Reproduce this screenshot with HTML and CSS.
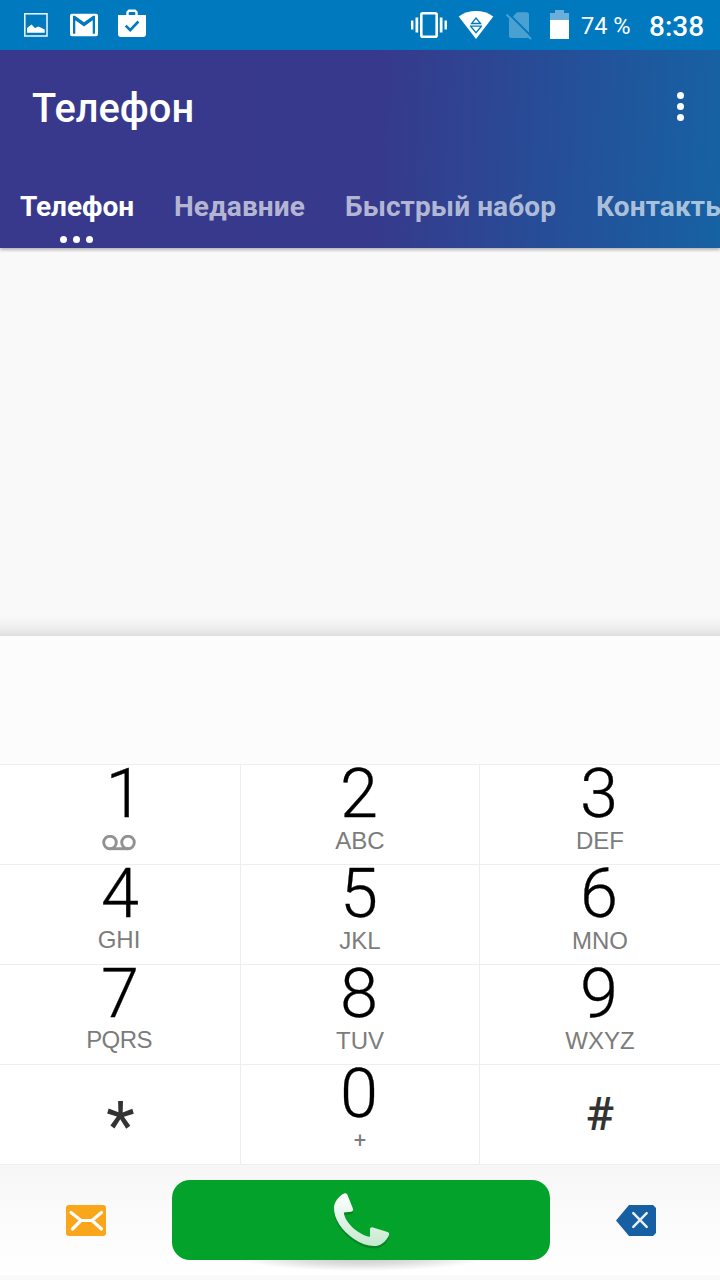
FILE: index.html
```html
<!DOCTYPE html>
<html lang="ru">
<head>
<meta charset="utf-8">
<title>Телефон</title>
<link rel="stylesheet" href="styles.css">
</head>
<body>
<div class="screen">
  <div class="status">
    <svg class="status-left" width="150" height="50" viewBox="0 0 150 50">
      <rect x="24.8" y="13.8" width="22.200" height="22.200" fill="none" stroke="#e4f1f9" stroke-width="1.600"/>
      <path fill="#fff" d="M27 32.8v-4.800l4.500-3.600 3.500 3.600 3.500-1.500 6.200 3v3.300z"/>
      <path fill="#fff" fill-rule="evenodd" d="M72 13.700h24a2 2 0 0 1 2 2v18.600a2 2 0 0 1-2 2H72a2 2 0 0 1-2-2V15.700a2 2 0 0 1 2-2zM73 15.700v18h2.300V20.200L84 26.500l8.700-6.300v13.500H95v-18h-1.800L84 22.300l-9.200-6.600z"/>
      <path fill="#fff" d="M118 15h28v19a3 3 0 0 1-3 3h-22a3 3 0 0 1-3-3z"/>
      <path fill="none" stroke="#fff" stroke-width="2.400" d="M127.500 15.500v-3.300l1.500-1.500h6l1.500 1.500v3.300"/>
      <path fill="none" stroke="#0179bf" stroke-width="2.600" d="M125.700 25.700l4.500 4.500 8.200-8.700"/>
    </svg>
    <svg class="status-icons" width="164" height="50" viewBox="410 0 164 50">
      <rect x="421.300" y="13.200" width="15.400" height="23.600" rx="1.500" fill="none" stroke="#fff" stroke-width="2.600"/>
      <path fill="#fff" d="M411 20.500h2.400v9H411zM415.500 17.500h2.700v15h-2.700zM439.800 17.500h2.700v15h-2.700zM444.500 20.500h2.400v9h-2.400z"/>
      <path fill="#fff" d="M458.700 16.500C469 9.300 483 9.300 493.300 16.500L476 39z"/>
      <path fill="none" stroke="#0179bf" stroke-width="1.300" d="M471.600 23.500h9L476 18zM470 26.200h12M470.800 26.500l5.200 6.200 5.200-6.200"/>
      <path fill="#4ba0d2" d="M514 15.500l3-3.300h9.500a2.500 2.500 0 0 1 2.500 2.500V36a2 2 0 0 1-2 2h-16a2 2 0 0 1-2-2V19.500z"/>
      <path stroke="#0179bf" stroke-width="2" d="M509 14l22 22"/>
      <path stroke="#4ba0d2" stroke-width="2" d="M506.500 14.500l24.500 24.500"/>
      <path fill="#69afd9" d="M550 13h5v-3h9v3h5v8h-19z"/>
      <path fill="#fff" d="M550 20h19v19h-19z"/>
    </svg>
    <span class="battery">74 %</span>
    <span class="clock">8:38</span>
  </div>
  <header class="header">
    <div class="title-row">
      <h1 class="title">Телефон</h1>
      <div class="menu"><i></i><i></i><i></i></div>
    </div>
    <nav class="tabs">
      <span class="tab tab-active">Телефон</span>
      <span class="tab">Недавние</span>
      <span class="tab">Быстрый набор</span>
      <span class="tab">Контакты</span>
    </nav>
    <div class="dots"><i></i><i></i><i></i></div>
  </header>
  <main class="list"></main>
  <div class="display"></div>
  <div class="pad">
    <div class="key left one"><b>1</b>
      <svg class="voicemail" width="34" height="16" viewBox="0 0 34 16"><g fill="none" stroke="#929292" stroke-width="2.900"><circle cx="8" cy="7.500" r="6.300"/><circle cx="26" cy="7.500" r="6.300"/><path d="M8 13.700h18"/></g></svg>
    </div>
    <div class="key low"><b>2</b><span>ABC</span></div>
    <div class="key"><b>3</b><span>DEF</span></div>
    <div class="key left"><b>4</b><span>GHI</span></div>
    <div class="key"><b>5</b><span>JKL</span></div>
    <div class="key"><b>6</b><span>MNO</span></div>
    <div class="key left"><b>7</b><span class="tight">PQRS</span></div>
    <div class="key"><b>8</b><span>TUV</span></div>
    <div class="key"><b>9</b><span>WXYZ</span></div>
    <div class="key symbol star">*</div>
    <div class="key"><b>0</b><span class="plus">+</span></div>
    <div class="key symbol hash">#</div>
  </div>
  <footer class="actions">
    <svg class="mail" width="40" height="31" viewBox="0 0 40 31"><rect width="40" height="31" rx="3" fill="#f9a61a"/><path d="M5 7.500l10 8h11l9.500-8M6.500 24l8.500-8.500M26 15.500l9.500 8.500" fill="none" stroke="#fff" stroke-width="3.200" stroke-linecap="round"/></svg>
    <div class="call">
      <svg width="60" height="60" viewBox="0 0 60 60">
        <defs><linearGradient id="handset" x1="0" y1="0" x2="0" y2="1"><stop offset="0" stop-color="#fff"/><stop offset="1" stop-color="#c5e9cf"/></linearGradient></defs>
        <path class="phone-shade" transform="translate(0 2.500)" d="M15 3.200C12 3.500 4.500 10 4 17c-.5 12 8 24 20 32 7 5 15 7.500 22 7 6-.5 11-6 13-11 .5-1.500 0-2.500-1.500-3L43 37.500c-1.800-.5-3 .5-3 2v7.200C31 46 15 34 13.800 22.500l7.400-.8c1.600-.3 2.300-1.500 1.800-3L17.500 5c-.5-1.200-1.200-1.900-2.500-1.800z"/>
        <path fill="url(#handset)" d="M15 3.200C12 3.500 4.500 10 4 17c-.5 12 8 24 20 32 7 5 15 7.500 22 7 6-.5 11-6 13-11 .5-1.500 0-2.500-1.500-3L43 37.500c-1.800-.5-3 .5-3 2v7.200C31 46 15 34 13.800 22.500l7.400-.8c1.600-.3 2.300-1.500 1.800-3L17.500 5c-.5-1.200-1.200-1.900-2.500-1.800z"/>
      </svg>
    </div>
    <svg class="erase" width="40" height="31" viewBox="0 0 40 31"><path fill="#165fa3" d="M13 0h24l3 3v25l-3 3H13L0 15.500z"/><path d="M17.300 8.200l13.400 13.600M30.700 8.200L17.300 21.800" stroke="#e6eef6" stroke-width="2.500" stroke-linecap="round"/></svg>
  </footer>
</div>
</body>
</html>
```
FILE: styles.css
```css
* { box-sizing: border-box; }
body { margin: 0; font-family: Roboto, "Noto Sans", sans-serif; }
.screen { width: 720px; height: 1280px; overflow: hidden; display: flex; flex-direction: column; background: #f9f9f9; }

.status { height: 50px; flex: none; display: flex; background: #0179bf; color: #fff; }
.status-icons { margin-left: 260px; }
.battery { margin-left: 7px; font-size: 23.6px; line-height: 52px; width: 68px; white-space: nowrap; }
.clock { font-size: 28px; font-weight: 500; line-height: 53px; }

.header { height: 198px; flex: none; color: #fff; background: linear-gradient(93deg, #38398c 0%, #37398c 52%, #1662a3 100%); box-shadow: 0 2px 3px rgba(0, 0, 0, .28); }
.title-row { height: 116px; display: flex; justify-content: space-between; padding: 0 36px 0 32px; }
.title { margin: 0; font-size: 39.8px; font-weight: 500; line-height: 117px; }
.menu { display: flex; flex-direction: column; gap: 4px; padding-top: 42px; }
.menu i, .dots i { width: 7px; height: 7px; border-radius: 50%; background: #fff; }
.tabs { height: 70px; display: flex; gap: 40px; padding-left: 20px; overflow: hidden; white-space: nowrap; }
.tab { font-size: 28px; font-weight: 700; line-height: 81px; letter-spacing: .1px; color: rgba(255, 255, 255, .65); }
.tab-active { color: #fff; letter-spacing: -.05px; }
.dots { display: flex; gap: 6px; padding-left: 60px; }

.list { height: 388px; flex: none; background: linear-gradient(to bottom, transparent 368px, #eee 380px, #dedede 388px); }
.display { height: 128px; flex: none; background: #fcfcfc; }

.pad { height: 400px; flex: none; display: grid; grid-template-columns: 240px 239px 241px; grid-template-rows: repeat(4, 100px); background: #fff; }
.key { display: flex; flex-direction: column; align-items: center; border-top: 1px solid #eee; }
.key:nth-child(3n+2) { border-left: 1px solid #eee; }
.key:nth-child(3n) { border-left: 1px solid #eee; }
.key b { height: 55px; margin-right: 2px; font-size: 68.5px; font-weight: 300; line-height: 57px; color: #000; -webkit-text-stroke: .3px #000; }
.key span { margin-top: 11px; font-family: "Liberation Sans", sans-serif; font-size: 24px; font-weight: 400; line-height: 20px; color: #7c7c7c; }
.left span { margin-top: 10px; margin-right: 2px; }
.key .tight { letter-spacing: -.6px; }
.left b { margin-right: 0; }
.one b { margin: 0 0 0 9px; }
.low b { line-height: 58px; }
.voicemail { margin: 15px 2px 0 0; }
.key .plus { font-family: Roboto, sans-serif; font-size: 22px; }
.symbol { justify-content: center; color: #333; }
.star { font-size: 66px; font-weight: 400; padding-top: 24px; padding-left: 1px; line-height: 1; }
.hash { font-size: 47px; font-weight: 500; padding-bottom: 2px; }

.actions { height: 116px; flex: none; display: flex; align-items: flex-start; padding: 15px 64px 0 66px; justify-content: space-between; border-top: 1px solid #eee; background: radial-gradient(ellipse 125px 14px at 361px 92px, rgba(0, 0, 0, .22), rgba(0, 0, 0, .12) 55%, transparent) no-repeat, linear-gradient(to bottom, #f7f7f7, #fff 110px, #f9f9f9 111px); }
.mail, .erase { margin-top: 25px; }
.call { width: 378px; height: 80px; border-radius: 18px; background: #02a22b; display: flex; justify-content: center; padding: 10px 2px 0 0; }
.phone-shade { fill: #078523; }
```
